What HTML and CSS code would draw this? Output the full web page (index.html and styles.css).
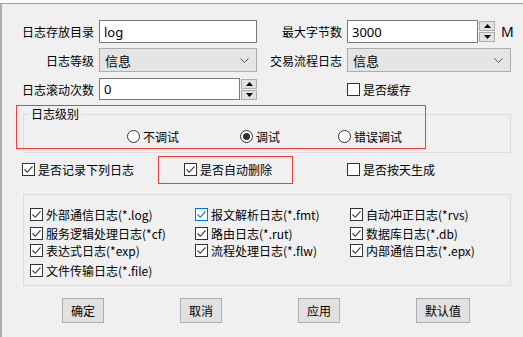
FILE: index.html
```html
<!DOCTYPE html>
<html lang="zh-CN">
<head>
    <meta charset="UTF-8">
    <title>日志设置</title>
    <link rel="stylesheet" href="styles.css">
</head>
<body>
    <div class="window">
        <div class="form-grid">
            <label class="lbl h23">日志存放目录</label>
            <div class="textbox w158 h23">log</div>
            <label class="lbl lbl2 h23">最大字节数</label>
            <div class="field-unit">
                <div class="textbox w131 h23">3000</div>
                <div class="spin">
                    <span class="spin-btn"><svg width="7" height="4" viewBox="0 0 7 4"><path d="M3.5 0L7 4H0z"/></svg></span>
                    <span class="spin-btn"><svg width="7" height="4" viewBox="0 0 7 4"><path d="M0 0h7L3.5 4z"/></svg></span>
                </div>
                <span class="unit">M</span>
            </div>

            <label class="lbl h24">日志等级</label>
            <div class="combo w158">信息<svg class="chev" width="9" height="5" viewBox="0 0 9 5"><path d="M0.5 0.5l4 4 4-4" /></svg></div>
            <label class="lbl lbl2 h24">交易流程日志</label>
            <div class="combo w164">信息<svg class="chev" width="9" height="5" viewBox="0 0 9 5"><path d="M0.5 0.5l4 4 4-4" /></svg></div>

            <label class="lbl h22">日志滚动次数</label>
            <div class="field-unit">
                <div class="textbox w142 h22">0</div>
                <div class="spin spin22">
                    <span class="spin-btn"><svg width="7" height="4" viewBox="0 0 7 4"><path d="M3.5 0L7 4H0z"/></svg></span>
                    <span class="spin-btn"><svg width="7" height="4" viewBox="0 0 7 4"><path d="M0 0h7L3.5 4z"/></svg></span>
                </div>
            </div>
            <span></span>
            <label class="check cache"><span class="box"></span>是否缓存</label>
        </div>

        <!-- 日志级别 -->
        <div class="group group-level">
            <span class="group-title">日志级别</span>
            <div class="radio-row">
                <label class="radio r1"><span class="dot"></span>不调试</label>
                <label class="radio r2"><span class="dot on"></span>调试</label>
                <label class="radio"><span class="dot"></span>错误调试</label>
            </div>
        </div>

        <div class="check-row">
            <label class="check c1"><span class="box"><svg viewBox="0 0 11 11"><path d="M1.5 5.5l2.8 2.8 5.2-6"/></svg></span>是否记录下列日志</label>
            <label class="check c2"><span class="box"><svg viewBox="0 0 11 11"><path d="M1.5 5.5l2.8 2.8 5.2-6"/></svg></span>是否自动删除</label>
            <label class="check"><span class="box"></span>是否按天生成</label>
        </div>

        <div class="group group-files">
            <div class="file-grid">
                <label class="check"><span class="box"><svg viewBox="0 0 11 11"><path d="M1.5 5.5l2.8 2.8 5.2-6"/></svg></span>外部通信日志(*.log)</label>
                <label class="check focus"><span class="box"><svg viewBox="0 0 11 11"><path d="M1.5 5.5l2.8 2.8 5.2-6"/></svg></span>报文解析日志(*.fmt)</label>
                <label class="check"><span class="box"><svg viewBox="0 0 11 11"><path d="M1.5 5.5l2.8 2.8 5.2-6"/></svg></span>自动冲正日志(*rvs)</label>

                <label class="check"><span class="box"><svg viewBox="0 0 11 11"><path d="M1.5 5.5l2.8 2.8 5.2-6"/></svg></span>服务逻辑处理日志(*cf)</label>
                <label class="check"><span class="box"><svg viewBox="0 0 11 11"><path d="M1.5 5.5l2.8 2.8 5.2-6"/></svg></span>路由日志(*.rut)</label>
                <label class="check"><span class="box"><svg viewBox="0 0 11 11"><path d="M1.5 5.5l2.8 2.8 5.2-6"/></svg></span>数据库日志(*.db)</label>

                <label class="check"><span class="box"><svg viewBox="0 0 11 11"><path d="M1.5 5.5l2.8 2.8 5.2-6"/></svg></span>表达式日志(*exp)</label>
                <label class="check"><span class="box"><svg viewBox="0 0 11 11"><path d="M1.5 5.5l2.8 2.8 5.2-6"/></svg></span>流程处理日志(*.flw)</label>
                <label class="check"><span class="box"><svg viewBox="0 0 11 11"><path d="M1.5 5.5l2.8 2.8 5.2-6"/></svg></span>内部通信日志(*.epx)</label>

                <label class="check"><span class="box"><svg viewBox="0 0 11 11"><path d="M1.5 5.5l2.8 2.8 5.2-6"/></svg></span>文件传输日志(*.file)</label>
            </div>
        </div>

        <div class="buttons">
            <button class="btn">确定</button>
            <button class="btn">取消</button>
            <button class="btn">应用</button>
            <button class="btn wide">默认值</button>
        </div>

        <!-- 标注框 -->
        <div class="mark mark-level"></div>
        <div class="mark mark-delete"></div>
    </div>
</body>
</html>
```

FILE: styles.css
```css
body {
    margin: 0;
    background-color: #fafafa;
    font-family: "Microsoft YaHei", "Noto Sans CJK SC", sans-serif;
    font-size: 12px;
    color: #000;
}
.window {
    position: relative;
    margin-top: 3px;
    min-height: calc(100vh - 4px);
    border-top: 1px solid #a0a0a0;
    border-left: 2px solid #acacac;
    background-color: #f0f0f0;
}
.form-grid {
    display: grid;
    grid-template-columns: 97px 158px 90px auto;
    grid-template-rows: 28px 30px 22px;
    align-items: start;
    padding-top: 16px;
}
.lbl {
    display: flex;
    align-items: center;
    justify-content: flex-end;
    padding-right: 5px;
    white-space: nowrap;
}
.lbl2 {
    padding-right: 5px;
}
.h22 { height: 22px; }
.h23 { height: 23px; }
.h24 { height: 24px; }
.w131 { width: 131px; }
.w142 { width: 142px; }
.w158 { width: 158px; }
.w164 { width: 164px; }
.textbox {
    box-sizing: border-box;
    display: flex;
    align-items: center;
    padding-left: 4px;
    border: 1px solid #7a7a7a;
    background-color: #fff;
    font-family: "Noto Sans", "Noto Sans CJK SC", sans-serif;
    font-size: 13px;
}
.field-unit {
    display: flex;
    align-items: center;
}
.spin {
    display: flex;
    flex-direction: column;
    justify-content: center;
    gap: 1px;
    width: 16px;
    height: 23px;
    margin-left: 1px;
}
.spin22 {
    height: 22px;
}
.spin-btn {
    box-sizing: border-box;
    display: flex;
    align-items: center;
    justify-content: center;
    height: 10px;
    border: 1px solid #adadad;
    background-color: #e1e1e1;
}
.spin-btn svg {
    fill: #000;
}
.unit {
    margin-left: 6px;
    font-family: "Noto Sans", sans-serif;
    font-size: 14px;
}
.combo {
    box-sizing: border-box;
    display: flex;
    align-items: center;
    justify-content: space-between;
    height: 24px;
    padding: 0 7px 0 5px;
    border: 1px solid #adadad;
    background-color: #e5e5e5;
    font-size: 13px;
}
.chev {
    fill: none;
    stroke: #555;
    stroke-width: 1;
}
.check {
    display: flex;
    align-items: center;
    gap: 3px;
    height: 13px;
    white-space: nowrap;
}
.cache {
    margin-top: 5px;
}
.box {
    box-sizing: border-box;
    display: flex;
    align-items: center;
    justify-content: center;
    width: 13px;
    height: 13px;
    flex: none;
    border: 1px solid #333;
    background-color: #fff;
}
.box svg {
    width: 11px;
    height: 11px;
    fill: none;
    stroke: #333;
    stroke-width: 1.1;
}
.check.focus .box {
    border-color: #0078d7;
}
.check.focus .box svg {
    stroke: #0078d7;
}
.group {
    position: relative;
    box-sizing: border-box;
    width: 488px;
    margin-left: 21px;
    border: 1px solid #dcdcdc;
}
.group-level {
    height: 39px;
    margin-top: 14px;
    padding-top: 15px;
}
.group-title {
    position: absolute;
    top: -9px;
    left: 5px;
    padding: 0 2px;
    line-height: 16px;
    background-color: #f0f0f0;
}
.radio-row {
    display: flex;
    padding-left: 103px;
}
.radio {
    display: flex;
    align-items: center;
    gap: 3px;
    height: 13px;
}
.r1 { width: 113px; }
.r2 { width: 98px; }
.dot {
    box-sizing: border-box;
    display: flex;
    align-items: center;
    justify-content: center;
    width: 13px;
    height: 13px;
    border: 1px solid #333;
    border-radius: 50%;
    background-color: #fff;
}
.dot.on::after {
    content: "";
    width: 7px;
    height: 7px;
    border-radius: 50%;
    background-color: #333;
}
.check-row {
    display: flex;
    margin-top: 10px;
    padding-left: 20px;
}
.c1 { width: 162px; }
.c2 { width: 163px; }
.group-files {
    height: 92px;
    margin-top: 18px;
    padding: 13px 0 0 6px;
}
.file-grid {
    display: grid;
    grid-template-columns: 165px 155px auto;
    grid-template-rows: 19px 17px 20px 13px;
    align-items: start;
}
.buttons {
    display: flex;
    gap: 76px;
    margin-top: 12px;
    padding-left: 60px;
}
.btn {
    box-sizing: border-box;
    width: 42px;
    height: 25px;
    padding: 0;
    border: 1px solid #adadad;
    background-color: #e1e1e1;
    font-family: inherit;
    font-size: 12px;
    color: #000;
}
.btn.wide {
    width: 54px;
}
.mark {
    position: absolute;
    border: 1px solid #f03c3c;
}
.mark-level {
    left: 14px;
    top: 101px;
    width: 408px;
    height: 42px;
}
.mark-delete {
    left: 156px;
    top: 152px;
    width: 133px;
    height: 26px;
}
```
